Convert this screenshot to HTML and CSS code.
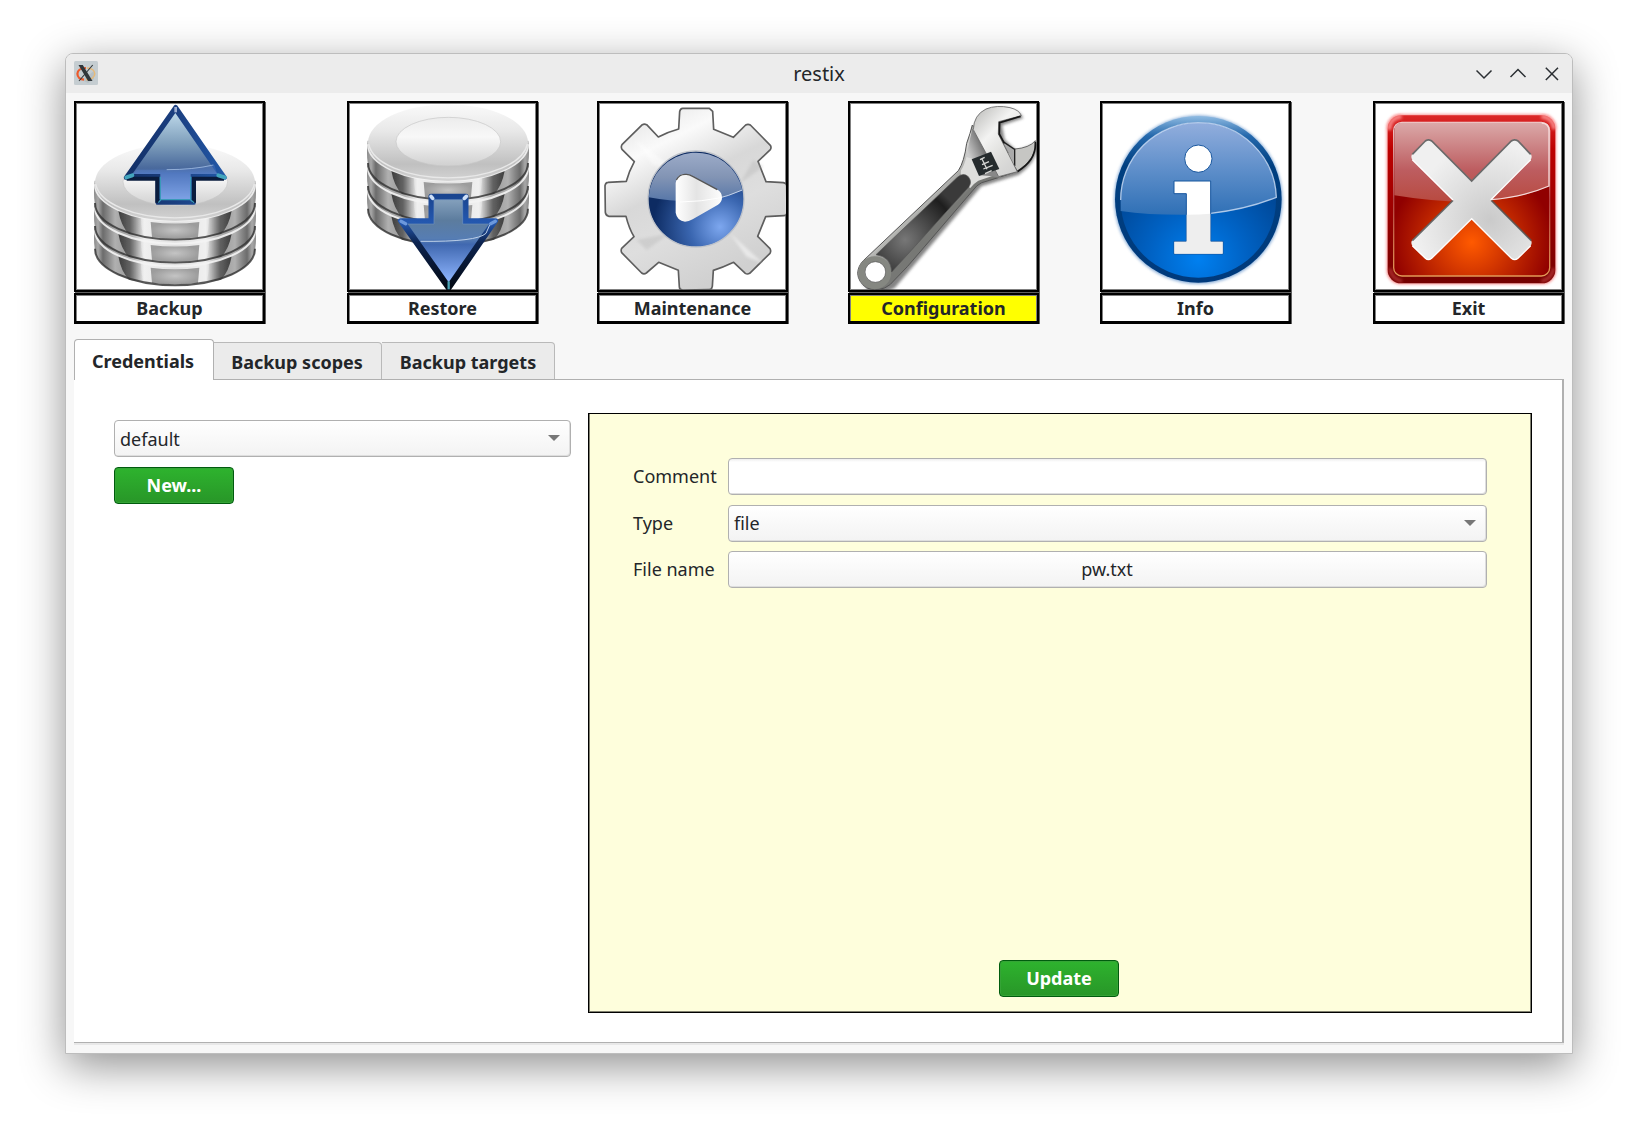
FILE: index.html
```html
<!DOCTYPE html>
<html lang="en">
<head>
<meta charset="utf-8">
<title>restix</title>
<link rel="stylesheet" href="styles.css">
</head>
<body>
<svg class="defs" width="0" height="0" aria-hidden="true">
  <defs>
    <linearGradient id="discSide">
      <stop offset="0" stop-color="#8a8a8a"/><stop offset=".025" stop-color="#a8a8a8"/><stop offset=".055" stop-color="#6c6c6c"/>
      <stop offset=".085" stop-color="#858585"/><stop offset=".13" stop-color="#b0b0b0"/><stop offset=".18" stop-color="#a4a4a4"/>
      <stop offset=".24" stop-color="#b4b4b4"/><stop offset=".31" stop-color="#f0f0f0"/>
      <stop offset=".5" stop-color="#e0e0e0"/><stop offset=".69" stop-color="#f0f0f0"/><stop offset=".76" stop-color="#b4b4b4"/>
      <stop offset=".82" stop-color="#a4a4a4"/><stop offset=".87" stop-color="#b0b0b0"/>
      <stop offset=".915" stop-color="#858585"/><stop offset=".945" stop-color="#6c6c6c"/><stop offset=".975" stop-color="#a8a8a8"/><stop offset="1" stop-color="#8a8a8a"/>
    </linearGradient>
    <linearGradient id="wedgeLeft"><stop offset="0" stop-color="#3c3c3c"/><stop offset=".45" stop-color="#555" stop-opacity=".85"/><stop offset="1" stop-color="#999" stop-opacity="0"/></linearGradient>
    <linearGradient id="discTop" x2="0" y2="1">
      <stop offset="0" stop-color="#fafafa"/><stop offset=".35" stop-color="#e8e8e8"/><stop offset=".78" stop-color="#c0c0c0"/><stop offset="1" stop-color="#d4d4d4"/>
    </linearGradient>
    <linearGradient id="discInner" x2="0" y2="1">
      <stop offset="0" stop-color="#ececec"/><stop offset=".4" stop-color="#f8f8f8"/><stop offset="1" stop-color="#d0d0d0"/>
    </linearGradient>
    <radialGradient id="discBlock"><stop offset="0" stop-color="#c4c4c4"/><stop offset="1" stop-color="#9c9c9c"/></radialGradient>
    <filter id="soft2" x="-20%" y="-20%" width="140%" height="140%"><feGaussianBlur stdDeviation="2"/></filter>
    <filter id="soft4" x="-20%" y="-20%" width="140%" height="140%"><feGaussianBlur stdDeviation="4"/></filter>
    <g id="disc">
      <path d="M113 152Q109 190 113 217A240 113 0 0 0 595 217Q599 190 595 152Z" fill="url(#discSide)"/>
      <path id="wedge" d="M184 242Q192 288 216 312L262 322Q252 300 252 262Z" fill="url(#wedgeLeft)" filter="url(#soft2)"/>
      <use href="#wedge" transform="translate(708 0) scale(-1 1)"/>
      <path d="M281 276q73 9 146 0l-4 46q-69 7-138 0Z" fill="url(#discBlock)" filter="url(#soft2)"/>
      <path d="M114 219A239 109 0 0 0 594 219" fill="none" stroke="#333" stroke-width="6" opacity=".8" filter="url(#soft2)"/>
      <path d="M114 163A240 109 0 0 0 594 163" fill="none" stroke="#f4f4f4" stroke-width="6" opacity=".9" filter="url(#soft2)"/>
    </g>
    <g id="stack">
      <use href="#disc" y="137"/><use href="#disc" y="69"/><use href="#disc"/>
      <ellipse cx="354" cy="158" rx="240" ry="115" fill="url(#discTop)"/>
      <path d="M116 162A239 112 0 0 0 592 162" fill="none" stroke="#e8e8e8" stroke-width="4"/>
      <ellipse cx="355" cy="155" rx="157" ry="73" fill="url(#discInner)" stroke="#c6c6c6" stroke-width="2"/>
    </g>
    <linearGradient id="upFill" x2="0" y2="1">
      <stop offset="0" stop-color="#bcd7e8"/><stop offset=".35" stop-color="#7f9fbc"/><stop offset=".64" stop-color="#49699c"/><stop offset=".7" stop-color="#5075b8"/><stop offset="1" stop-color="#8eb0ee"/>
    </linearGradient>
    <linearGradient id="upEdge" x2="1"><stop offset="0" stop-color="#122f66"/><stop offset=".5" stop-color="#1b3f80"/><stop offset="1" stop-color="#2258a8"/></linearGradient>
    <linearGradient id="downEdge" x2="0" y2="1"><stop offset="0" stop-color="#1a4590"/><stop offset=".28" stop-color="#2458b0"/><stop offset=".5" stop-color="#0d2450"/><stop offset="1" stop-color="#020812"/></linearGradient>
    <linearGradient id="downFill" x2="0" y2="1"><stop offset="0" stop-color="#84a0bc"/><stop offset=".25" stop-color="#5c7c9e"/><stop offset=".47" stop-color="#567db3"/><stop offset=".54" stop-color="#4068b0"/><stop offset="1" stop-color="#8fb6ff"/></linearGradient>
    <linearGradient id="gearFill" x2=".5" y2="1"><stop offset="0" stop-color="#dcdcdc"/><stop offset=".28" stop-color="#fafafa"/><stop offset=".5" stop-color="#d8d8d8"/><stop offset=".7" stop-color="#dedede"/><stop offset="1" stop-color="#d0d0d0"/></linearGradient>
    <radialGradient id="orb" cx=".75" cy=".79" r=".7"><stop offset="0" stop-color="#7da7ef"/><stop offset=".45" stop-color="#3a66b0"/><stop offset="1" stop-color="#0d2b62"/></radialGradient>
    <linearGradient id="orbGloss" x2="0" y2="1"><stop offset="0" stop-color="#9cabc8"/><stop offset=".5" stop-color="#8294b4"/><stop offset="1" stop-color="#5676a8"/></linearGradient>
    <linearGradient id="playFill"><stop offset="0" stop-color="#fff"/><stop offset=".45" stop-color="#e4e4e4"/><stop offset="1" stop-color="#fdfdfd"/></linearGradient>
    <linearGradient id="steel" gradientUnits="userSpaceOnUse" x1="230" y1="290" x2="330" y2="390"><stop offset="0" stop-color="#888a86"/><stop offset=".3" stop-color="#d8d8d6"/><stop offset=".7" stop-color="#9a9b98"/><stop offset="1" stop-color="#777875"/></linearGradient>
    <linearGradient id="jaw" gradientUnits="userSpaceOnUse" x1="430" y1="90" x2="590" y2="240"><stop offset="0" stop-color="#c9c9c7"/><stop offset=".3" stop-color="#f3f3f2"/><stop offset=".6" stop-color="#dededc"/><stop offset="1" stop-color="#ccc"/></linearGradient>
    <linearGradient id="slot" gradientUnits="userSpaceOnUse" x1="410" y1="180" x2="470" y2="155"><stop offset="0" stop-color="#ccc"/><stop offset="1" stop-color="#555"/></linearGradient>
    <radialGradient id="grip" gradientUnits="userSpaceOnUse" cx="225" cy="450" r="180"><stop offset="0" stop-color="#777"/><stop offset=".85" stop-color="#1e1e1e"/><stop offset="1" stop-color="#3a3a3a"/></radialGradient>
    <radialGradient id="infoFill" cx=".5" cy=".88" r=".62"><stop offset="0" stop-color="#0080f0"/><stop offset=".5" stop-color="#0062c4"/><stop offset="1" stop-color="#004898"/></radialGradient>
    <linearGradient id="infoGloss" x2="0" y2="1"><stop offset="0" stop-color="#92aedd"/><stop offset=".5" stop-color="#5f8fca"/><stop offset="1" stop-color="#2f70b6"/></linearGradient>
    <linearGradient id="infoRim" x2="0" y2="1"><stop offset="0" stop-color="#8fbbe2"/><stop offset=".12" stop-color="#2468ac"/><stop offset=".3" stop-color="#003f80"/><stop offset="1" stop-color="#003a7c"/></linearGradient>
    <linearGradient id="exitRim" x2="0" y2="1"><stop offset="0" stop-color="#dc2828"/><stop offset=".2" stop-color="#bd0000"/><stop offset="1" stop-color="#740000"/></linearGradient>
    <radialGradient id="exitFill" cx=".5" cy=".78" r=".52"><stop offset="0" stop-color="#ff5a00"/><stop offset="1" stop-color="#900000"/></radialGradient>
    <linearGradient id="exitGloss" x2="0" y2="1"><stop offset="0" stop-color="#dba9a9"/><stop offset=".6" stop-color="#bd5d60"/><stop offset="1" stop-color="#b84a40"/></linearGradient>
    <linearGradient id="exitLine" x2="0" y2="1"><stop offset="0" stop-color="#f3cccc"/><stop offset=".5" stop-color="#b44040"/><stop offset="1" stop-color="#e29a56"/></linearGradient>
    <radialGradient id="crossFill" gradientUnits="userSpaceOnUse" cx="420" cy="540" r="230"><stop offset="0" stop-color="#cacaca"/><stop offset="1" stop-color="#f0f0f0"/></radialGradient>
  </defs>
</svg>

<main class="window">
  <header class="titlebar">
    <svg class="app-icon" viewBox="0 0 24 24">
      <rect width="24" height="24" rx="1.5" fill="#c5cdd1"/>
      <path d="M8 19L14 22L20 18V10Z" fill="#aeb7bc" opacity=".6"/>
      <path d="M12 7C6 7 3.400 9.800 3.400 12.800C3.400 16 6 18.400 10 18.600" fill="none" stroke="#ee5a2b" stroke-width="2.200"/>
      <path d="M13 7C18 7 20.800 9.800 20.800 12.800C20.800 16 17.500 18.800 12 18.700" fill="none" stroke="#e8ba78" stroke-width="1.500"/>
      <path d="M4.500 4H8.800L18.500 20H14Z" fill="#30363a"/>
      <path d="M18.700 4L5 20" stroke="#30363a" stroke-width="1.100"/>
    </svg>
    <h1 class="title">restix</h1>
    <svg class="window-controls" viewBox="0 0 84 14" fill="none" stroke="#2b2f33" stroke-width="1.500">
      <path d="M.5 3.500L8 11L15.500 3.500M34.500 10L42 2.500L49.500 10M69.800 .8L82 13M82 .8L69.800 13"/>
    </svg>
  </header>

  <nav class="toolbar">
    <button class="tile">
      <span class="picture"><svg viewBox="78 189 561 561">
        <use href="#stack" x="21" y="270"/>
        <path d="M377 201L524 413H431V488H323V413H228Z" fill="url(#upEdge)" stroke="url(#upEdge)" stroke-width="13" stroke-linejoin="round"/>
        <path d="M230 416H322V488M432 488V416H522" fill="none" stroke="#0a1c3e" stroke-width="12"/>
        <path d="M376 219L502 402H422V478H331V402H247Z" fill="url(#upFill)"/>
        <path d="M260 390Q400 392 493 374L502 402H422V478H331V402H250Z" fill="#5580d0" opacity=".3"/>
        <path d="M350 389Q430 389 490 375" fill="none" stroke="#b5cdec" stroke-width="2"/>
        <path d="M325 488L333 479H421L432 488M331 478V410M422 478V410" fill="none" stroke="#3999b8" stroke-width="4"/>
        <path d="M229 412l18-6M524 412l-19-6" stroke="#43a5bd" stroke-width="12" stroke-linecap="round"/>
        <path d="M377 201v16" stroke="#9daed0" stroke-width="8"/>
      </svg></span>
      <span class="caption">Backup</span>
    </button>
    <button class="tile tile-restore">
      <span class="picture"><svg viewBox="57 39 561 561">
        <use href="#stack"/>
        <path d="M303 319H408V392H497L356 596L211 392H303Z" fill="url(#downEdge)" stroke="url(#downEdge)" stroke-width="15" stroke-linejoin="round"/>
        <path d="M312 329H398V402H477L356 577L233 402H312Z" fill="url(#downFill)"/>
        <path d="M272 454Q440 456 468 430L479 405" fill="none" stroke="#bccfe8" stroke-width="3"/>
        <path d="M233 402H312V329H398V402H479" fill="none" stroke="#6f93bd" stroke-width="2"/>
        <path d="M303 319l5 6M409 319l-6 6" stroke="#cfe0f8" stroke-width="11" stroke-linecap="round"/>
        <path d="M213 394l14 7M496 394l-14 7" stroke="#6c98dc" stroke-width="10" stroke-linecap="round"/>
        <path d="M356 574v24" stroke="#4aa3b3" stroke-width="7"/>
      </svg></span>
      <span class="caption">Restore</span>
    </button>
    <button class="tile tile-maintenance">
      <span class="picture"><svg viewBox="57 39 561 561">
        <path d="M308 55L388 55L398 64L401 118L460 142L497 105Q504 101 511 105L571 166Q575 172 571 179L534 214L558 275L610 278Q620 280 620 287L621 367Q620 377 612 377L557 380L533 439L570 476Q574 483 570 490L509 550Q502 554 496 550L461 517Q430 532 400 541L397 589Q395 599 388 599L308 600Q298 599 298 591L295 541L236 517L199 549Q192 554 185 549L125 488Q122 481 125 475L162 440Q147 415 138 379L86 379Q77 376 76 367L75 287Q77 277 84 277L139 274Q147 244 163 215L126 178Q122 171 126 164L187 104Q193 101 200 104L235 141Q266 125 296 117L299 65Q301 55 308 55Z" fill="url(#gearFill)" stroke="#5e5e5e" stroke-width="5" stroke-linejoin="round"/>
        <path d="M165 150L290 240L220 225Z" fill="#fff" opacity=".45" filter="url(#soft4)"/>
        <path d="M170 450L270 430L200 480Z" fill="#aaa" opacity=".3" filter="url(#soft4)"/>
        <path d="M520 210L480 280L550 230Z" fill="#aaa" opacity=".3" filter="url(#soft4)"/>
        <path d="M450 430L550 520L500 500Z" fill="#fff" opacity=".5" filter="url(#soft4)"/>
        <circle cx="348" cy="327" r="144" fill="url(#orb)" stroke="#bfc3ca" stroke-width="4"/>
        <path d="M206 322A142 140 0 0 1 487 300Q400 342 330 334Q270 334 206 322Z" fill="url(#orbGloss)"/>
        <path d="M330 334Q400 338 487 300" fill="none" stroke="#c3d2ea" stroke-width="3"/>
        <path d="M287 279Q290 252 317 252Q326 252 338 258L414 300Q426 308 426 323Q426 335 414 344L338 388Q326 395 315 395Q291 392 287 368Z" fill="url(#playFill)"/>
        <path d="M289 270Q298 252 317 253Q326 252 338 259L412 299" fill="none" stroke="#555" stroke-width="4"/>
        <path d="M300 336Q365 335 424 323" fill="none" stroke="#fff" stroke-width="3"/>
      </svg></span>
      <span class="caption">Maintenance</span>
    </button>
    <button class="tile tile-configuration is-current">
      <span class="picture"><svg viewBox="60 39 561 561">
        <path d="M96 515L390 240L428 110Q450 52 510 50Q560 50 576 80L512 102L520 145L556 178L618 155Q620 210 562 250L450 285L190 590Q140 620 96 580Q80 550 96 515Z" transform="translate(4 4)" fill="#333" opacity=".6" filter="url(#soft4)"/>
        <path d="M100 512L385 242Q403 215 410 160Q421 130 427 105L545 225L558 245Q500 265 455 278Q440 285 428 302L232 530L180 584Q150 608 110 594Q84 575 83 550Q84 528 100 512Z" fill="url(#steel)" stroke="#555" stroke-width="3"/>
        <path d="M393 241Q412 213 420 135L430 112L540 240L445 272Q430 281 420 295L392 252Z" fill="#dededc"/>
        <path d="M427 115L500 235L465 205L430 208L408 200Z" fill="url(#slot)"/>
        <path d="M448 256L505 236L512 264Q480 256 448 256Z" fill="#888"/>
        <path d="M554 177Q598 174 616 152Q623 205 562 243L528 190L554 178Z" fill="#c6c6c3" stroke="#333" stroke-width="2"/>
        <path d="M616 156Q620 210 562 245" fill="none" stroke="#161616" stroke-width="5"/>
        <path d="M554 177L556 228L519 155Z" fill="#aaa"/>
        <path d="M519 155L554 178V228" fill="none" stroke="#222" stroke-width="4"/>
        <path d="M430 119Q431 75 468 57Q500 44 540 53Q568 60 574 77L540 86L506 95L505 132L562 245L506 260Z" fill="url(#jaw)" stroke="#666" stroke-width="2.500"/>
        <path d="M572 79L509 98L508 132L523 160" fill="none" stroke="#161616" stroke-width="5"/>
        <path d="M425 208L483 185L508 237L447 258Z" fill="#252b2d"/>
        <path d="M450 209l14-7M456 224l21-9M460 237l28-11M465 251l20-9M455 205l16 33" stroke="#d8d8d6" stroke-width="4"/>
        <path d="M138 494L382 262Q400 246 415 260Q427 276 417 290L185 546Q184 500 138 494Z" fill="url(#grip)" stroke="#555" stroke-width="2"/>
        <circle cx="134" cy="548" r="40" fill="none" stroke="#858781" stroke-width="19"/>
        <circle cx="136" cy="546" r="31" fill="#fff" stroke="#555" stroke-width="2"/>
      </svg></span>
      <span class="caption">Configuration</span>
    </button>
    <button class="tile tile-info">
      <span class="picture"><svg viewBox="66 39 561 561">
        <circle cx="355" cy="329" r="253" fill="#407cc0" opacity=".6" filter="url(#soft4)"/>
        <circle cx="355" cy="328" r="250" fill="url(#infoRim)"/>
        <circle cx="355" cy="330" r="233" fill="url(#infoFill)"/>
        <path d="M122 363V330A233 232 0 0 1 355 98A234 232 0 0 1 589 322Q470 370 350 374Q220 377 122 363Z" fill="url(#infoGloss)"/>
        <path d="M122 330A233 232 0 0 1 355 98A234 232 0 0 1 589 322Q500 358 392 370" fill="none" stroke="#d0e0f6" stroke-width="4" opacity=".8"/>
        <g stroke="#17569e" stroke-width="3">
          <circle cx="355" cy="206" r="41" fill="#fff"/>
          <path d="M282 273H392V454H429V492H282V454H319V311H282Z" fill="#fff"/>
        </g>
        <path d="M320 374Q360 374 391 371V455H428V491H283V455H320Z" fill="#eee"/>
      </svg></span>
      <span class="caption">Info</span>
    </button>
    <button class="tile tile-exit">
      <span class="picture"><svg viewBox="75 189 561 561">
        <rect x="110" y="223" width="508" height="510" rx="42" fill="#f03030" opacity=".55" filter="url(#soft4)"/>
        <rect x="113" y="226" width="503" height="504" rx="40" fill="url(#exitRim)"/>
        <path d="M117 270Q118 233 155 229M574 229Q609 232 613 268" fill="none" stroke="#ff9b9b" stroke-width="13" opacity=".8" filter="url(#soft4)"/>
        <path d="M120 685Q124 717 156 724M574 724Q605 717 611 685" fill="none" stroke="#d05050" stroke-width="10" opacity=".6" filter="url(#soft4)"/>
        <rect x="131" y="247" width="468" height="461" rx="25" fill="url(#exitFill)" stroke="url(#exitLine)" stroke-width="4"/>
        <path d="M133 466V272Q133 248 157 248H575Q598 248 598 272V438Q430 515 133 466Z" fill="url(#exitGloss)"/>
        <path d="M575 249Q597 250 597 272V438Q520 471 424 479" fill="none" stroke="#f5dada" stroke-width="4"/>
        <path d="M226 301Q235 294 245 301L365 421L484 301Q494 294 504 301L542 341Q548 350 542 359L422 480L542 600Q548 608 542 617L504 655Q494 663 484 655L365 536L245 655Q235 663 226 655L187 617Q181 608 187 600L309 480L187 359Q181 350 187 341Z" fill="url(#crossFill)"/>
        <path d="M187 343L226 303Q235 296 245 303L365 423L484 303Q494 296 504 303L542 343M309 481L187 602M424 481L544 602" fill="none" stroke="#555" stroke-width="5" opacity=".85" filter="url(#soft2)"/>
        <path d="M187 359L309 480M542 359L422 480M187 617L226 655Q235 663 245 655L365 536L484 655Q494 663 504 655L542 617" fill="none" stroke="#fff" stroke-width="4"/>
      </svg></span>
      <span class="caption">Exit</span>
    </button>
  </nav>

  <div class="tabs" role="tablist">
    <button class="tab is-active" role="tab">Credentials</button>
    <button class="tab tab-scopes" role="tab">Backup scopes</button>
    <button class="tab tab-targets" role="tab">Backup targets</button>
  </div>

  <section class="pane">
    <div class="sidebar">
      <div class="field combo"><span>default</span><svg class="arrow" viewBox="0 0 12 6"><path d="M0 0H12L6 6Z" fill="#777"/></svg></div>
      <button class="action">New...</button>
    </div>
    <form class="details">
      <div class="form-grid">
        <label class="label">Comment</label><div class="field entry"></div>
        <label class="label label-type">Type</label><div class="field combo"><span>file</span><svg class="arrow" viewBox="0 0 12 6"><path d="M0 0H12L6 6Z" fill="#777"/></svg></div>
        <label class="label">File name</label><div class="field file-button">pw.txt</div>
      </div>
      <button class="action update" type="button">Update</button>
    </form>
  </section>
</main>
</body>
</html>
```
FILE: styles.css
```css
* { box-sizing: border-box; }

body {
  margin: 0;
  height: 1131px;
  padding: 53px 65px 0;
  background: #fff;
  color: #232629;
  font: 18px/24px "Noto Sans", sans-serif;
  overflow: hidden;
}

button {
  margin: 0;
  padding: 0;
  border: 0;
  background: none;
  color: inherit;
  font: inherit;
}

.defs { display: block; height: 0; }

.window {
  display: flex;
  flex-direction: column;
  width: 1508px;
  height: 1001px;
  border: 1px solid #bdbdbd;
  border-radius: 8px 8px 0 0;
  background: #f7f7f7;
  box-shadow: 0 12px 44px rgba(0, 0, 0, .44);
}

.titlebar {
  display: grid;
  grid-template-columns: 84px 1fr 84px;
  align-items: center;
  height: 39px;
  padding: 0 12px 0 8px;
  border-radius: 7px 7px 0 0;
  background: #ececec;
}
.app-icon { width: 24px; height: 24px; margin-bottom: 1px; }
.title { margin: 0; padding-left: 4px; text-align: center; font-size: 20px; font-weight: 400; line-height: 26px; }
.window-controls { width: 84px; height: 14px; }

.toolbar { display: flex; padding: 8px 0 0 8px; }
.tile { display: block; width: 192px; height: 223px; font-weight: 700; }
.tile-restore { margin-left: 81px; }
.tile-maintenance { margin-left: 58px; }
.tile-configuration { margin-left: 59px; }
.tile-info { margin-left: 60px; }
.tile-exit { margin-left: 81px; }
.picture {
  display: block;
  width: 191px;
  height: 191px;
  border: 2px solid #000;
  background: #fff;
  box-shadow: inset 0 0 0 1px #808080, 1px 1px 0 #606060;
}
.picture svg { display: block; width: 187px; height: 187px; }
.caption {
  display: block;
  width: 191px;
  height: 31px;
  margin-top: 1px;
  border: 2px solid #000;
  border-bottom-width: 3px;
  background: #fff;
  box-shadow: inset 0 1px 0 #808080, inset 1px 0 0 #808080, inset -1px 0 0 #808080, 1px 0 0 #606060;
  line-height: 27px;
  text-align: center;
}
.is-current .caption { background: #ff0; }

.tabs { display: flex; align-items: flex-end; height: 56px; padding: 15px 0 0 8px; font-weight: 700; }
.tab {
  height: 38px;
  padding-top: 2px;
  border: 1px solid #b9b9b9;
  border-left: 0;
  border-radius: 0 4px 0 0;
  background: #ebebeb;
  text-align: center;
}
.tab.is-active {
  width: 140px;
  height: 41px;
  padding-right: 2px;
  border: 1px solid #b0b0b0;
  border-bottom: 0;
  border-radius: 4px 4px 0 0;
  background: #fff;
}
.tab-scopes { width: 168px; padding-right: 1px; }
.tab-targets { width: 173px; }

.pane {
  display: flex;
  align-items: flex-start;
  width: 1490px;
  height: 664px;
  margin: -1px 0 0 8px;
  padding: 34px 30px 0 40px;
  border: solid #b0b0b0;
  border-width: 1px 2px 1px 0;
  background: #fff;
  box-shadow: 0 2px 0 #e8e8e8;
}
.tab.is-active { z-index: 1; position: relative; }
.sidebar { display: grid; gap: 10px; width: 457px; padding-top: 6px; }
.field {
  display: flex;
  align-items: center;
  height: 37px;
  border: 1px solid #b0b0b0;
  border-radius: 4px;
  background: linear-gradient(#fff, #f3f3f3);
  box-shadow: inset -1px -1px 0 #dedede;
}
.combo { justify-content: space-between; padding: 0 10px 0 5px; }
.arrow { width: 12px; height: 6px; margin-bottom: 1px; }
.entry { background: linear-gradient(#eee, #fff 3px); }
.file-button { justify-content: center; padding: 0 1px 1px 0; }
.action {
  width: 120px;
  height: 37px;
  padding-bottom: 2px;
  border: 1px solid #005c0e;
  border-radius: 4px;
  background: linear-gradient(#2eb32e, #289628);
  box-shadow: inset 0 0 0 1px #35a336;
  color: #fff;
  font-weight: 700;
}
.details {
  display: flex;
  flex-direction: column;
  justify-content: space-between;
  align-items: center;
  width: 944px;
  height: 600px;
  margin: -1px 0 0 17px;
  padding: 44px 44px 15px;
  border: 1px solid #000;
  background: #fefedc;
  box-shadow: inset 1px 0 0 #80806f, inset -1px 0 0 #80806f, inset 0 -1px 0 #80806f;
}
.form-grid { display: grid; grid-template-columns: 95px 1fr; grid-template-rows: repeat(3, 37px); row-gap: 9.500px; align-items: center; width: 100%; }
.label { padding-bottom: 2px; }
.label-type { padding-bottom: 0; }
.update { margin-right: 2px; }
```
